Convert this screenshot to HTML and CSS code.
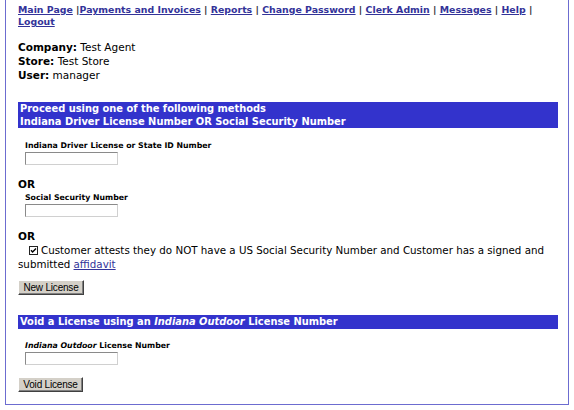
FILE: index.html
```html
<!DOCTYPE html>
<html>
<head>
<meta charset="utf-8">
<title>License</title>
<link rel="stylesheet" href="styles.css">
</head>
<body>
<div class="page">
  <div class="nav"><a href="#">Main Page</a> |<a href="#">Payments and Invoices</a> | <a href="#">Reports</a> | <a href="#">Change Password</a> | <a href="#">Clerk Admin</a> | <a href="#">Messages</a> | <a href="#">Help</a> | <br><a href="#">Logout</a></div>

  <div class="info">
    <div><b>Company:</b> Test Agent</div>
    <div><b>Store:</b> Test Store</div>
    <div><b>User:</b> manager</div>
  </div>

  <div class="bar bar-two">Proceed using one of the following methods<br>Indiana Driver License Number OR Social Security Number</div>

  <div class="field field-first">
    <div class="label">Indiana Driver License or State ID Number</div>
    <input class="text" type="text">
  </div>

  <div class="or or-first">OR</div>
  <div class="field field-ssn">
    <div class="label">Social Security Number</div>
    <input class="text" type="text">
  </div>

  <div class="or or-second">OR</div>
  <div class="attest"><span class="check"><svg width="9" height="9" viewBox="0 0 9 9"><rect x="0.5" y="0.5" width="8" height="8" fill="#fff" stroke="#222"/><path d="M2 4.2 L3.6 6 L7 2.4" fill="none" stroke="#000" stroke-width="1.4"/></svg></span>Customer attests they do NOT have a US Social Security Number and Customer has a signed and submitted <a href="#">affidavit</a></div>

  <button class="btn btn-new" type="button">New License</button>

  <div class="bar bar-one">Void a License using an <i>Indiana Outdoor</i> License Number</div>

  <div class="field field-void">
    <div class="label"><i>Indiana Outdoor</i> License Number</div>
    <input class="text" type="text">
  </div>

  <button class="btn btn-void" type="button">Void License</button>
</div>
</body>
</html>
```

FILE: styles.css
```css
html, body {
  margin: 0;
  padding: 0;
  background: #fff;
}

body {
  font-family: "DejaVu Sans", Verdana, sans-serif;
  color: #000;
}

.page {
  margin-left: 5px;
  width: 564px;
  height: 405px;
  box-sizing: border-box;
  padding: 4px 0 0 12px;
  border-left: 1px solid #6c6cd0;
  border-right: 1px solid #6c6cd0;
  border-bottom: 1px solid #6c6cd0;
}

.nav {
  font-size: 9.4px;
  font-weight: bold;
  line-height: 12px;
  color: #333;
}

.nav a, .attest a {
  color: #333399;
  text-decoration: underline;
}

.attest a {
  font-weight: normal;
}

.info {
  margin-top: 12px;
  font-size: 10.5px;
  line-height: 14px;
}

.bar {
  width: 540px;
  background: #3333cc;
  color: #fff;
  font-weight: bold;
  font-size: 9.9px;
  line-height: 13px;
  padding-left: 2px;
  box-sizing: border-box;
}

.bar-two {
  margin-top: 20px;
}

.bar-one {
  margin-top: 20px;
  height: 14px;
}

.field {
  padding-left: 7px;
}

.field-first {
  margin-top: 13px;
}

.field-ssn {
  margin-top: 2px;
}

.field-void {
  margin-top: 12px;
}

.label {
  font-size: 7.8px;
  font-weight: bold;
  line-height: 10px;
}

.text {
  display: block;
  margin: 1px 0 0 0;
  width: 93px;
  height: 13px;
  box-sizing: border-box;
  padding: 0;
  border: 1px solid;
  border-color: #8a8a8a #d0d0d0 #d0d0d0 #8a8a8a;
  background: #fff;
}

.or {
  font-size: 10.5px;
  font-weight: bold;
  line-height: 14px;
}

.or-first {
  margin-top: 12px;
}

.or-second {
  margin-top: 12px;
}

.attest {
  font-size: 10.3px;
  line-height: 14px;
  width: 540px;
}

.check {
  display: inline-block;
  margin: 0 3px 0 11px;
  vertical-align: -1px;
}

.check svg {
  display: block;
}

.btn {
  display: block;
  white-space: nowrap;
  font-family: "Liberation Sans", Arial, sans-serif;
  font-size: 10px;
  color: #000;
  background: #d4d0c8;
  height: 15px;
  padding: 0 2px;
  border: 1px solid;
  border-color: #fff #404040 #404040 #fff;
  box-shadow: inset -1px -1px 0 #808080;
  line-height: 12px;
  letter-spacing: -0.2px;
  text-align: center;
}

.btn-new {
  margin-top: 9px;
  width: 66px;
}

.btn-void {
  margin-top: 12px;
  width: 65px;
}
```
